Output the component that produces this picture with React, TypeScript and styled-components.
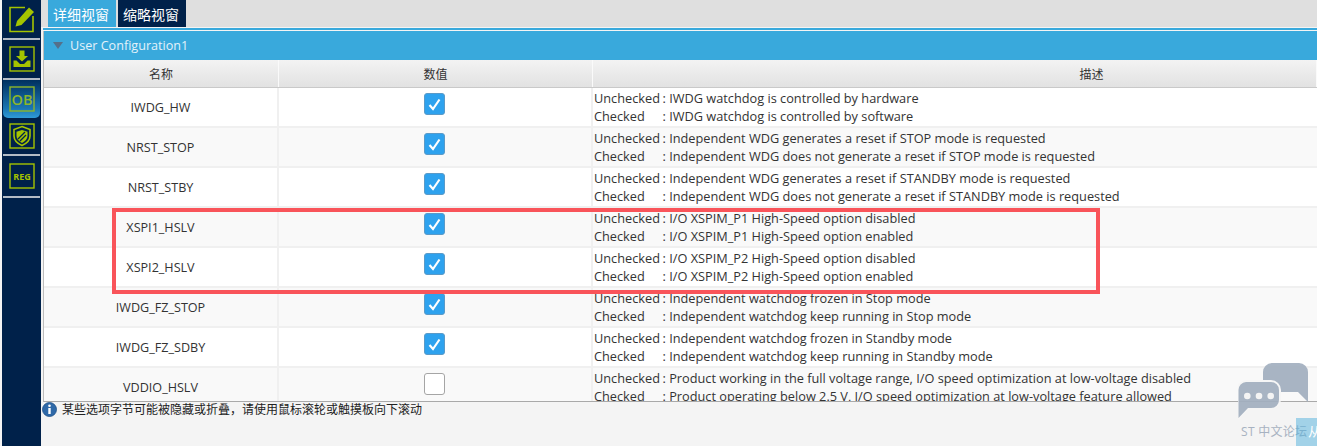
import React from 'react';
import styled, { createGlobalStyle } from 'styled-components';

const GlobalStyle = createGlobalStyle`
  html, body { margin: 0; padding: 0; background: #f4f4f4; overflow: hidden; }
  body { font-family: 'Open Sans', 'Noto Sans CJK SC', sans-serif; }
`;

const Page = styled.div`
  position: relative;
  display: flex;
  width: 1317px;
  height: 446px;
  overflow: hidden;
  background: #f4f4f4;
`;

const Sidebar = styled.div`
  width: 39px;
  margin-left: 2px;
  flex: none;
  background: #00214a;
  display: flex;
  flex-direction: column;
  align-items: stretch;
`;

const SideItem = styled.div<{ $active?: boolean; $h: number }>`
  height: ${({ $h }) => $h}px;
  box-sizing: border-box;
  margin: 0 1px;
  display: flex;
  align-items: center;
  justify-content: center;
  border-bottom: ${({ $active }) => ($active ? '0' : '2px solid #b4bcc6')};
  border-radius: ${({ $active }) => ($active ? '0 0 5px 5px' : '0')};
  background: ${({ $active }) => ($active ? 'linear-gradient(#00305f 0%, #1b76b2 75%, #2f9ad8 100%)' : 'transparent')};
`;

const Main = styled.div`
  flex: 1;
  min-width: 0;
  display: flex;
  flex-direction: column;
`;

const TabBar = styled.div`
  height: 27px;
  padding-left: 7px;
  display: flex;
  gap: 2px;
  background: #dfdfdf;
  flex: none;
`;

const TabRule = styled.div`
  height: 2px;
  margin: 1px 0 1px 2px;
  background: #39a9dc;
  flex: none;
`;

const Tab = styled.div<{ $active?: boolean }>`
  height: 27px;
  padding: 0 7px 0 5px;
  display: flex;
  align-items: center;
  font-size: 14px;
  color: #fff;
  background: ${({ $active }) => ($active ? '#39a9dc' : '#00214a')};
`;

const Panel = styled.div`
  height: 370px;
  margin-left: 2px;
  overflow: hidden;
  background: #fff;
  border-left: 1px solid #bdbdbd;
  border-bottom: 1px solid #a9a9a9;
  flex: none;
`;

const SectionBar = styled.div`
  height: 29px;
  margin-left: -1px;
  display: flex;
  align-items: center;
  gap: 7px;
  padding-left: 10px;
  font-size: 12.6px;
  color: #e4f2fa;
  background: #39a9dc;
`;

const Arrow = styled.span`
  width: 0;
  height: 0;
  border-left: 5.5px solid transparent;
  border-right: 5.5px solid transparent;
  border-top: 7px solid #55708a;
`;

const Columns = styled.div`
  display: grid;
  grid-template-columns: 235px 314px 1fr;
`;

const HeadRow = styled(Columns)`
  height: 27px;
  border-bottom: 1px solid #c9c9c9;
`;

const HeadCell = styled.div<{ $offset?: number }>`
  display: flex;
  align-items: center;
  justify-content: center;
  padding-left: ${({ $offset }) => $offset ?? 0}px;
  font-size: 12px;
  color: #333;
  background: linear-gradient(#f3f3f3, #e2e2e2);
  border-right: 1px solid #fafafa;
`;

const Row = styled(Columns)<{ $alt: boolean }>`
  height: 38px;
  border-bottom: 2px solid #f0f0f0;
  background: ${({ $alt }) => ($alt ? '#f9f9f9' : '#fff')};
`;

const NameCell = styled.div`
  display: flex;
  align-items: center;
  justify-content: center;
  font-size: 12.6px;
  color: #333;
  border-right: 2px solid #f0f0f0;
`;

const ValueCell = styled(NameCell)`
  padding-right: 2px;
  padding-bottom: 6px;
`;

const CheckBox = styled.span<{ $checked: boolean }>`
  width: 21px;
  height: 22px;
  box-sizing: border-box;
  display: flex;
  align-items: center;
  justify-content: center;
  border-radius: 3px;
  border: 1px solid ${({ $checked }) => ($checked ? '#5a9ac8' : '#a5a5a5')};
  background: ${({ $checked }) => ($checked ? '#2ea2ee' : '#fff')};
`;

const DescCell = styled.div`
  padding: 1px 0 0 1px;
  font-size: 12.75px;
  line-height: 18px;
  color: #333;
  white-space: pre;
  overflow: hidden;
`;

const DescLine = styled.div`
  display: flex;
`;

const DescLabel = styled.span`
  width: 68.5px;
  flex: none;
`;

const Note = styled.div`
  display: flex;
  align-items: flex-start;
  gap: 5px;
  height: 17px;
  padding-left: 1px;
  font-size: 12px;
  line-height: 15px;
  color: #222;
`;

const Highlight = styled.div`
  position: absolute;
  left: 112px;
  top: 208px;
  width: 988px;
  height: 86px;
  box-sizing: border-box;
  border: 4px solid #f9545a;
`;

const ChatMark = styled.svg`
  position: absolute;
  left: 1238px;
  top: 363px;
  opacity: 0.92;
`;

const ForumLabel = styled.div`
  position: absolute;
  left: 1241px;
  top: 422px;
  font-size: 12px;
  letter-spacing: 0.3px;
  color: #a7b2c1;
  white-space: nowrap;
`;

const CornerBadge = styled.div`
  position: absolute;
  right: 0;
  top: 418px;
  width: 21px;
  height: 28px;
  padding: 3px 0 0 12px;
  box-sizing: border-box;
  font-size: 13px;
  color: #fff;
  white-space: nowrap;
  overflow: hidden;
  background: rgba(80, 175, 220, 0.5);
`;

const rows = [
  { name: 'IWDG_HW', checked: true, off: 'IWDG watchdog is controlled by hardware', on: 'IWDG watchdog is controlled by software' },
  { name: 'NRST_STOP', checked: true, off: 'Independent WDG generates a reset if STOP mode is requested', on: 'Independent WDG does not generate a reset if STOP mode is requested' },
  { name: 'NRST_STBY', checked: true, off: 'Independent WDG generates a reset if STANDBY mode is requested', on: 'Independent WDG does not generate a reset if STANDBY mode is requested' },
  { name: 'XSPI1_HSLV', checked: true, off: 'I/O XSPIM_P1 High-Speed option disabled', on: 'I/O XSPIM_P1 High-Speed option enabled' },
  { name: 'XSPI2_HSLV', checked: true, off: 'I/O XSPIM_P2 High-Speed option disabled', on: 'I/O XSPIM_P2 High-Speed option enabled' },
  { name: 'IWDG_FZ_STOP', checked: true, off: 'Independent watchdog frozen in Stop mode', on: 'Independent watchdog keep running in Stop mode' },
  { name: 'IWDG_FZ_SDBY', checked: true, off: 'Independent watchdog frozen in Standby mode', on: 'Independent watchdog keep running in Standby mode' },
  { name: 'VDDIO_HSLV', checked: false, off: 'Product working in the full voltage range, I/O speed optimization at low-voltage disabled', on: 'Product operating below 2.5 V, I/O speed optimization at low-voltage feature allowed' },
];

const LIME = '#a4c400';

const EditIcon = () => (
  <svg width="27" height="27" viewBox="0 0 27 27" fill="none">
    <path d="M17 1.500H2v24h23V10" stroke={LIME} strokeWidth="1.600" />
    <path d="M7.500 20.500l1.500-5.500L21 1.500l5 4.500L13.500 19z" fill={LIME} />
  </svg>
);

const DownloadIcon = () => (
  <svg width="26" height="26" viewBox="0 0 26 26" fill="none">
    <rect x="1" y="1" width="24" height="24" stroke={LIME} strokeWidth="1.4" />
    <path d="M10.500 4.500h5v5.500h3.500L13 15.500 7 10h3.500z" fill={LIME} />
    <path d="M4.500 14.500h3l3.500 3.500h4l3.500-3.500h3v6.500h-17z" fill={LIME} />
  </svg>
);

const ObIcon = () => (
  <svg width="26" height="26" viewBox="0 0 26 26" fill="none">
    <rect x="1" y="1" width="24" height="24" stroke="#8db52a" strokeWidth="1.4" />
    <text x="13" y="18.500" textAnchor="middle" fontFamily="'Open Sans', sans-serif" fontWeight="600" fontSize="14.500" fill="#8db52a">OB</text>
  </svg>
);

const ShieldIcon = () => (
  <svg width="26" height="26" viewBox="0 0 26 26" fill="none">
    <rect x="1" y="1" width="24" height="24" stroke={LIME} strokeWidth="1.4" />
    <path d="M13 3.500l8 3V13c0 4.500-3.500 7.500-8 9.500C8.500 20.500 5 17.500 5 13V6.500z" stroke={LIME} strokeWidth="1.600" />
    <path d="M13 7l5.500 1.700V13c0 3-2.300 5.300-5.500 7-3.200-1.700-5.500-4-5.500-7V8.700z" fill={LIME} />
    <path d="M9 16l7-7M11 18l6-6" stroke="#00214a" strokeWidth="1.300" />
  </svg>
);

const RegIcon = () => (
  <svg width="26" height="26" viewBox="0 0 26 26" fill="none">
    <rect x="1" y="1" width="24" height="24" stroke={LIME} strokeWidth="1.4" />
    <text x="13" y="16.500" textAnchor="middle" fontFamily="'Open Sans', sans-serif" fontWeight="700" fontSize="9" fill={LIME}>REG</text>
  </svg>
);

const InfoIcon = () => (
  <svg width="15" height="15" viewBox="0 0 15 15">
    <circle cx="7.500" cy="7.500" r="7" fill="#2f69a8" stroke="#1d4f86" strokeWidth="0.8" />
    <circle cx="7.500" cy="3.800" r="1.300" fill="#fff" />
    <rect x="6.300" y="6" width="2.400" height="6" fill="#fff" />
  </svg>
);

const Tick = () => (
  <svg width="15" height="15" viewBox="0 0 15 15" fill="none">
    <path d="M2.500 8L6 12 12.500 2.500" stroke="#fff" strokeWidth="2.200" />
  </svg>
);

export default function App() {
  return (
    <Page>
      <GlobalStyle />
      <Sidebar>
        <SideItem $h={40}><EditIcon /></SideItem>
        <SideItem $h={40}><DownloadIcon /></SideItem>
        <SideItem $h={38} $active><ObIcon /></SideItem>
        <SideItem $h={38}><ShieldIcon /></SideItem>
        <SideItem $h={42}><RegIcon /></SideItem>
      </Sidebar>
      <Main>
        <TabBar>
          <Tab $active>详细视窗</Tab>
          <Tab>缩略视窗</Tab>
        </TabBar>
        <TabRule />
        <Panel>
          <SectionBar><Arrow />User Configuration1</SectionBar>
          <HeadRow>
            <HeadCell>名称</HeadCell>
            <HeadCell>数值</HeadCell>
            <HeadCell $offset={274}>描述</HeadCell>
          </HeadRow>
          {rows.map((row, i) => (
            <Row key={row.name} $alt={i % 2 === 1}>
              <NameCell>{row.name}</NameCell>
              <ValueCell>
                <CheckBox $checked={row.checked}>{row.checked && <Tick />}</CheckBox>
              </ValueCell>
              <DescCell>
                <DescLine><DescLabel>Unchecked</DescLabel>: {row.off}</DescLine>
                <DescLine><DescLabel>Checked</DescLabel>: {row.on}</DescLine>
              </DescCell>
            </Row>
          ))}
        </Panel>
        <Note><InfoIcon />某些选项字节可能被隐藏或折叠，请使用鼠标滚轮或触摸板向下滚动</Note>
      </Main>
      <Highlight />
      <ChatMark width="72" height="56" viewBox="0 0 72 56">
        <path d="M34 0h27a9 9 0 0 1 9 9v30L60 29H34a9 9 0 0 1-9-9V9a9 9 0 0 1 9-9z" fill="#a2afbf" />
        <path d="M8 19h25a8 8 0 0 1 8 8v10a8 8 0 0 1-8 8H10L0.500 55V27a8 8 0 0 1 7.500-8z" fill="#a2afbf" stroke="#f6f6f6" strokeWidth="4" paintOrder="stroke" />
        <circle cx="9.300" cy="33" r="3.300" fill="#f4f4f4" />
        <circle cx="21" cy="33" r="3.300" fill="#f4f4f4" />
        <circle cx="32.700" cy="33" r="3.300" fill="#f4f4f4" />
      </ChatMark>
      <ForumLabel>ST 中文论坛</ForumLabel>
      <CornerBadge>从</CornerBadge>
    </Page>
  );
}
